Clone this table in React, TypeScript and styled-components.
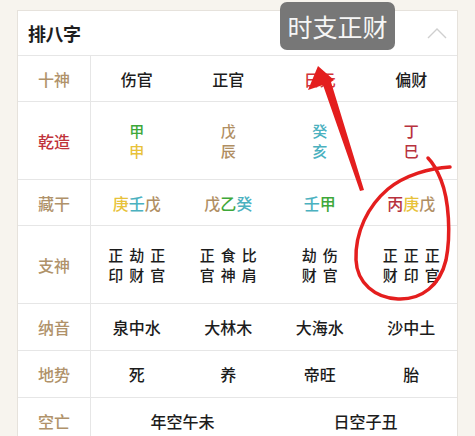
import React from "react";
import styled, { createGlobalStyle } from "styled-components";

const Global = createGlobalStyle`
  html, body { margin: 0; padding: 0; background: #f7f4ee; }
  body { font-family: "Noto Sans CJK SC", "Noto Sans", sans-serif; overflow: hidden; }
`;

const Page = styled.div`
  position: relative;
  width: 475px;
  height: 436px;
  padding: 10px 0 0 17px;
  box-sizing: border-box;
`;

const Card = styled.div`
  width: 441px;
  background: #fff;
  border: 1px solid #e6e2dc;
  box-sizing: border-box;
`;

const Header = styled.div`
  height: 44px;
  display: flex;
  align-items: center;
  justify-content: space-between;
  padding: 0 10px 0 10px;
  border-bottom: 1px solid #e6e6e6;
`;

const Title = styled.div`
  font-size: 18px;
  font-weight: 700;
  color: #1e1e1e;
  letter-spacing: -0.5px;
`;

const Grid = styled.div`
  display: grid;
  grid-template-columns: 73px repeat(4, 1fr);
`;

const Row = styled.div<{ $h: number }>`
  display: contents;
  & > * { height: ${(p) => p.$h}px; }
`;

const Label = styled.div<{ $red?: boolean }>`
  display: flex;
  align-items: center;
  justify-content: center;
  font-size: 16px;
  font-weight: 500;
  color: ${(p) => (p.$red ? "#c0323a" : "#b0926a")};
  border-right: 1px solid #e6e6e6;
  border-bottom: 1px solid #e6e6e6;
`;

const Cell = styled.div<{ $span?: number; $color?: string }>`
  display: flex;
  align-items: center;
  justify-content: center;
  font-size: 16px;
  font-weight: 500;
  color: ${(p) => p.$color || "#1c1c1c"};
  border-bottom: 1px solid #e6e6e6;
  grid-column: span ${(p) => p.$span || 1};
`;

const Stack = styled.div`
  display: flex;
  flex-direction: column;
  align-items: center;
  font-size: 15px;
  line-height: 20px;
`;

const Char = styled.span<{ $c: string }>`
  color: ${(p) => p.$c};
`;

const Multi = styled.div`
  display: flex;
  gap: 6px;
  font-size: 15px;
  line-height: 20px;
  color: #1c1c1c;
`;

const Tooltip = styled.div`
  position: absolute;
  left: 280px;
  top: 2px;
  width: 115px;
  height: 48px;
  border-radius: 7px;
  background: #777777;
  color: #f6f6f6;
  font-size: 25px;
  display: flex;
  align-items: center;
  justify-content: center;
`;

const Overlay = styled.svg`
  position: absolute;
  left: 0;
  top: 0;
  pointer-events: none;
`;

const Chevron = () => (
  <svg width="20" height="12" viewBox="0 0 20 12">
    <path d="M1 11 L10 2 L19 11" fill="none" stroke="#cfcfcf" strokeWidth="1.4" />
  </svg>
);

const GREEN = "#3ea83a";
const YELLOW = "#e8c23a";
const TAN = "#b08e62";
const TEAL = "#4bb1bf";
const RED = "#b8323e";

const gz: [string, string, string, string][] = [
  ["甲", GREEN, "申", YELLOW],
  ["戊", TAN, "辰", TAN],
  ["癸", TEAL, "亥", TEAL],
  ["丁", RED, "巳", RED],
];

const cang: [string, string][][] = [
  [["庚", YELLOW], ["壬", TEAL], ["戊", TAN]],
  [["戊", TAN], ["乙", GREEN], ["癸", TEAL]],
  [["壬", TEAL], ["甲", GREEN]],
  [["丙", RED], ["庚", YELLOW], ["戊", TAN]],
];

const zhishen: string[][] = [
  ["正印", "劫财", "正官"],
  ["正官", "食神", "比肩"],
  ["劫财", "伤官"],
  ["正财", "正印", "正官"],
];

export default function App() {
  return (
    <>
      <Global />
      <Page>
        <Card>
          <Header>
            <Title>排八字</Title>
            <Chevron />
          </Header>
          <Grid>
            <Row $h={45}>
              <Label>十神</Label>
              <Cell>伤官</Cell>
              <Cell>正官</Cell>
              <Cell $color="#d2353b">日元</Cell>
              <Cell>偏财</Cell>
            </Row>
            <Row $h={77}>
              <Label $red>乾造</Label>
              {gz.map((g, i) => (
                <Cell key={i}>
                  <Stack>
                    <Char $c={g[1]}>{g[0]}</Char>
                    <Char $c={g[3]}>{g[2]}</Char>
                  </Stack>
                </Cell>
              ))}
            </Row>
            <Row $h={45}>
              <Label>藏干</Label>
              {cang.map((c, i) => (
                <Cell key={i}>
                  {c.map(([ch, col], j) => (
                    <Char key={j} $c={col}>{ch}</Char>
                  ))}
                </Cell>
              ))}
            </Row>
            <Row $h={77}>
              <Label>支神</Label>
              {zhishen.map((z, i) => (
                <Cell key={i}>
                  <Multi>
                    {z.map((w, j) => (
                      <Stack key={j}>
                        <span>{w[0]}</span>
                        <span>{w[1]}</span>
                      </Stack>
                    ))}
                  </Multi>
                </Cell>
              ))}
            </Row>
            <Row $h={46}>
              <Label>纳音</Label>
              <Cell>泉中水</Cell>
              <Cell>大林木</Cell>
              <Cell>大海水</Cell>
              <Cell>沙中土</Cell>
            </Row>
            <Row $h={46}>
              <Label>地势</Label>
              <Cell>死</Cell>
              <Cell>养</Cell>
              <Cell>帝旺</Cell>
              <Cell>胎</Cell>
            </Row>
            <Row $h={46}>
              <Label>空亡</Label>
              <Cell $span={2}>年空午未</Cell>
              <Cell $span={2}>日空子丑</Cell>
            </Row>
          </Grid>
        </Card>
        <Tooltip>时支正财</Tooltip>
        <Overlay width="475" height="436" viewBox="0 0 475 436">
          <polygon points="318,66 308,90 323,85 360,191 364,190 331,82 334,80" fill="#e41e1e" />
          <path
            d="M450 167 C430 168 405 175 388 189 C368 206 355 232 356 260 C357 283 375 298 398 299 C422 300 440 285 446 260 C451 235 449 200 441 180 C437 170 433 163 428 158"
            fill="none"
            stroke="#e41e1e"
            strokeWidth="3.5"
            strokeLinecap="round"
          />
        </Overlay>
      </Page>
    </>
  );
}
